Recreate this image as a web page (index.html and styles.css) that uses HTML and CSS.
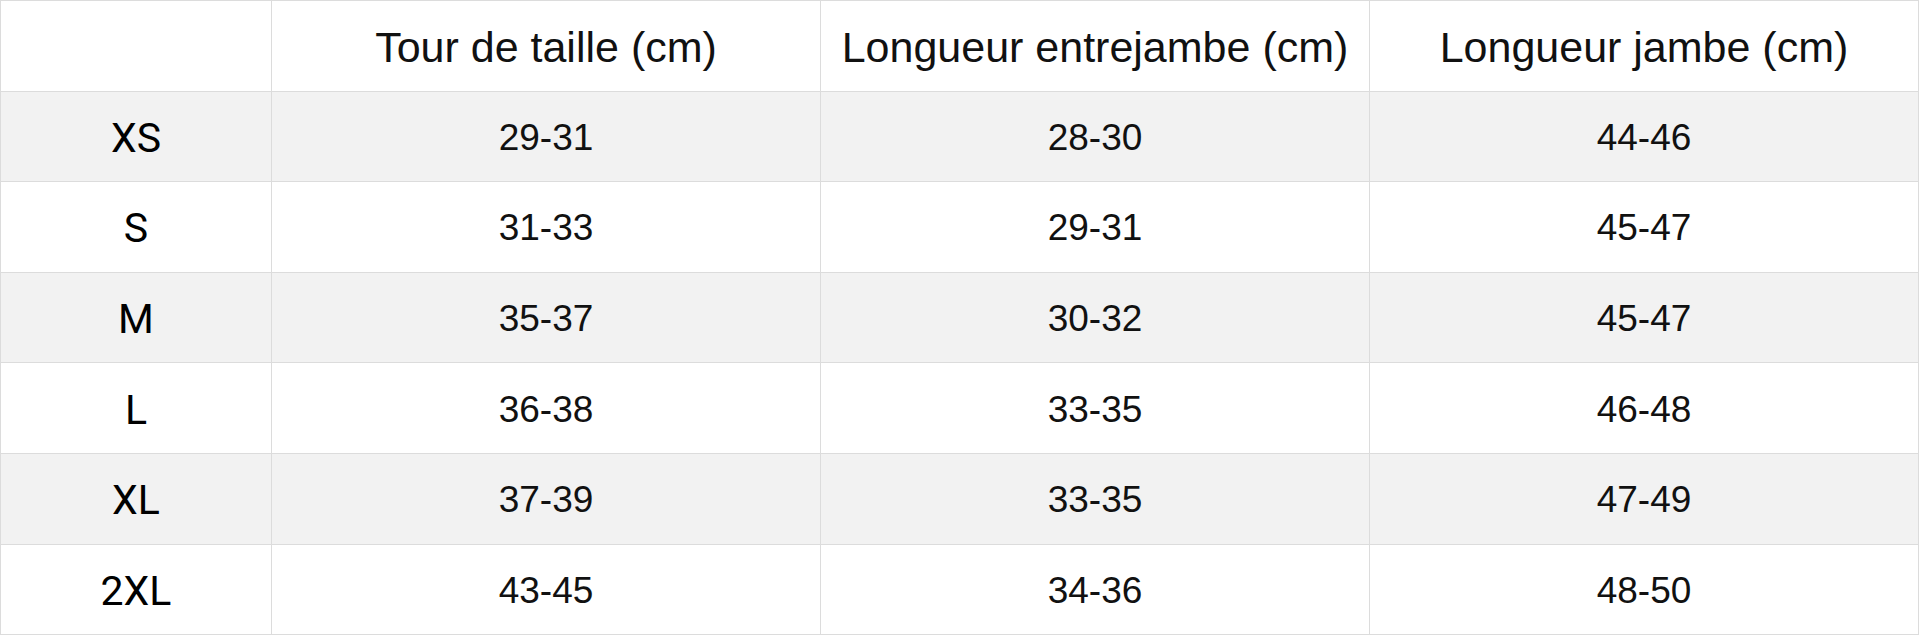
FILE: index.html
```html
<!DOCTYPE html>
<html lang="fr">
<head>
<meta charset="utf-8">
<title>Guide des tailles</title>
<link rel="stylesheet" href="styles.css">
</head>
<body>
<table class="size-table">
  <colgroup>
    <col class="col-size">
    <col class="col-data">
    <col class="col-data">
    <col class="col-data">
  </colgroup>
  <thead>
    <tr>
      <th class="corner"></th>
      <th>Tour de taille (cm)</th>
      <th>Longueur entrejambe (cm)</th>
      <th>Longueur jambe (cm)</th>
    </tr>
  </thead>
  <tbody>
    <tr><th class="size">XS</th><td>29-31</td><td>28-30</td><td>44-46</td></tr>
    <tr><th class="size">S</th><td>31-33</td><td>29-31</td><td>45-47</td></tr>
    <tr><th class="size">M</th><td>35-37</td><td>30-32</td><td>45-47</td></tr>
    <tr><th class="size">L</th><td>36-38</td><td>33-35</td><td>46-48</td></tr>
    <tr><th class="size">XL</th><td>37-39</td><td>33-35</td><td>47-49</td></tr>
    <tr><th class="size">2XL</th><td>43-45</td><td>34-36</td><td>48-50</td></tr>
  </tbody>
</table>
</body>
</html>
```

FILE: styles.css
```css
html, body {
  margin: 0;
  padding: 0;
  background: #ffffff;
}

.size-table {
  width: 1918px;
  border-collapse: collapse;
  table-layout: fixed;
  border: 1px solid #dcdcdc;
  color: #111111;
  font-family: "Liberation Sans", Arial, sans-serif;
}

.col-size {
  width: 271px;
}

.col-data {
  width: 549px;
}

.size-table tr {
  height: 90.6px;
}

.size-table th,
.size-table td {
  border: 1px solid #dcdcdc;
  padding: 0;
  text-align: center;
  vertical-align: middle;
}

.size-table thead th {
  font-size: 43px;
  font-weight: normal;
  padding-top: 4px;
}

.size-table tbody tr:nth-child(odd) {
  background: #f2f2f2;
}

.size-table tbody td {
  font-size: 37px;
  font-weight: normal;
  padding-top: 3px;
}

.size-table th.size {
  font-family: Roboto, "Liberation Sans", sans-serif;
  font-size: 41px;
  font-weight: normal;
  color: #000000;
  padding-top: 3px;
}
```
